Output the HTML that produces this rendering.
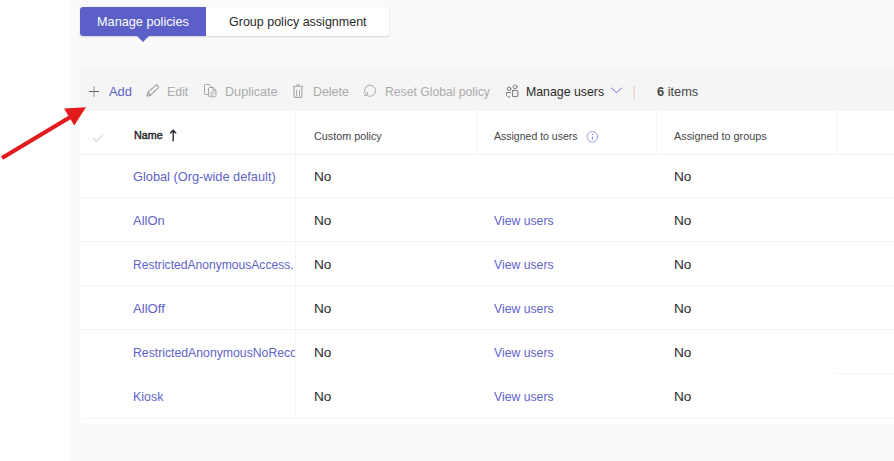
<!DOCTYPE html>
<html><head><meta charset="utf-8">
<style>
*{box-sizing:border-box;margin:0;padding:0}
html,body{width:894px;height:461px;overflow:hidden;background:#fff}
body{font-family:"Liberation Sans",sans-serif;position:relative;color:#242424}
#main{position:absolute;left:70px;top:0;width:824px;height:461px;background:#fafafa}
#tabs{position:absolute;left:80px;top:7px;width:309px;height:29px;background:#fff;border-radius:3px;box-shadow:0 1px 2px rgba(0,0,0,.16)}
#tab1bg{position:absolute;left:0;top:0;width:126px;height:29px;background:#5b5fc7;border-radius:3px 0 0 3px}
#tab1bg:after{content:"";position:absolute;left:56.5px;top:29px;border:6px solid transparent;border-top-color:#5b5fc7;border-bottom:0}
#toolbar{position:absolute;left:80px;top:68px;width:814px;height:43px;background:#f5f5f5;border-radius:3px 0 0 0}
#table{position:absolute;left:80px;top:111px;width:814px;height:313px;background:#fff;border-radius:0 0 0 3px}
.hr{position:absolute;left:80px;width:814px;height:1px;background:#f4f4f4}
.vr{position:absolute;width:1px;background:#f4f4f4}
.t{position:absolute;line-height:1;white-space:nowrap;transform-origin:0 0}
#clip{position:absolute;left:0;top:0;width:295px;height:461px;overflow:hidden}
svg{position:absolute;overflow:visible}
</style></head><body>
<div id="main"></div>
<div id="tabs"><div id="tab1bg"></div></div>
<div id="toolbar"></div>
<div id="table"></div>
<div class="hr" style="top:154px;background:#f0f0f0"></div>
<div class="hr" style="top:197px"></div>
<div class="hr" style="top:241px"></div>
<div class="hr" style="top:285px"></div>
<div class="hr" style="top:329px"></div>
<div class="hr" style="top:373px;left:836px;width:58px"></div>
<div class="hr" style="top:418px;background:#f5f5f5"></div>
<div class="vr" style="left:295px;top:111px;height:307px"></div>
<div class="vr" style="left:476px;top:111px;height:43px"></div>
<div class="vr" style="left:656px;top:111px;height:43px"></div>
<div class="vr" style="left:836px;top:111px;height:43px"></div>
<div class="t" id="tab1" style="left:97.13px;top:15.00px;font-size:13.2px;color:#fff;font-weight:400;transform:scaleX(0.9639)">Manage policies</div>
<div class="t" id="tab2" style="left:229.00px;top:15.00px;font-size:13.2px;color:#2a2a2a;font-weight:400;transform:scaleX(0.9479)">Group policy assignment</div>
<div class="t" id="add" style="left:109.07px;top:85.00px;font-size:13.2px;color:#5f63c9;font-weight:400;transform:scaleX(0.9769)">Add</div>
<div class="t" id="edit" style="left:166.92px;top:85.00px;font-size:13.2px;color:#ababab;font-weight:400;transform:scaleX(0.9377)">Edit</div>
<div class="t" id="dup" style="left:224.96px;top:85.00px;font-size:13.2px;color:#ababab;font-weight:400;transform:scaleX(0.9567)">Duplicate</div>
<div class="t" id="del" style="left:312.62px;top:85.00px;font-size:13.2px;color:#ababab;font-weight:400;transform:scaleX(0.9410)">Delete</div>
<div class="t" id="reset" style="left:384.50px;top:85.00px;font-size:13.2px;color:#ababab;font-weight:400;transform:scaleX(0.9236)">Reset Global policy</div>
<div class="t" id="manage" style="left:525.98px;top:85.00px;font-size:13.2px;color:#2a2a2a;font-weight:400;transform:scaleX(0.9346)">Manage users</div>
<div class="t" id="items" style="left:657.13px;top:85.00px;font-size:13.2px;color:#464646;font-weight:400;transform:scaleX(0.9686)"><b>6</b> items</div>
<div class="t" id="hname" style="left:133.65px;top:130.40px;font-size:11.4px;color:#2a2a2a;font-weight:400;-webkit-text-stroke:0.45px currentColor;transform:scaleX(0.9451)">Name</div>
<div class="t" id="hcust" style="left:313.74px;top:130.60px;font-size:11px;color:#464646;font-weight:400;transform:scaleX(0.9810)">Custom policy</div>
<div class="t" id="husers" style="left:493.65px;top:130.60px;font-size:11px;color:#464646;font-weight:400;transform:scaleX(0.9559)">Assigned to users</div>
<div class="t" id="hgroups" style="left:673.92px;top:130.60px;font-size:11px;color:#464646;font-weight:400;transform:scaleX(0.9835)">Assigned to groups</div>
<div class="t" id="c0" style="left:313.57px;top:170.00px;font-size:13.2px;color:#2a2a2a;font-weight:400;transform:scaleX(1.0304)">No</div>
<div class="t" id="g0" style="left:673.57px;top:170.00px;font-size:13.2px;color:#2a2a2a;font-weight:400;transform:scaleX(1.0304)">No</div>
<div class="t" id="c1" style="left:313.57px;top:214.00px;font-size:13.2px;color:#2a2a2a;font-weight:400;transform:scaleX(1.0304)">No</div>
<div class="t" id="v1" style="left:493.74px;top:214.00px;font-size:13.2px;color:#5f63c9;font-weight:400;transform:scaleX(0.9274)">View users</div>
<div class="t" id="g1" style="left:673.57px;top:214.00px;font-size:13.2px;color:#2a2a2a;font-weight:400;transform:scaleX(1.0304)">No</div>
<div class="t" id="c2" style="left:313.57px;top:258.00px;font-size:13.2px;color:#2a2a2a;font-weight:400;transform:scaleX(1.0304)">No</div>
<div class="t" id="v2" style="left:493.74px;top:258.00px;font-size:13.2px;color:#5f63c9;font-weight:400;transform:scaleX(0.9274)">View users</div>
<div class="t" id="g2" style="left:673.57px;top:258.00px;font-size:13.2px;color:#2a2a2a;font-weight:400;transform:scaleX(1.0304)">No</div>
<div class="t" id="c3" style="left:313.57px;top:302.00px;font-size:13.2px;color:#2a2a2a;font-weight:400;transform:scaleX(1.0304)">No</div>
<div class="t" id="v3" style="left:493.74px;top:302.00px;font-size:13.2px;color:#5f63c9;font-weight:400;transform:scaleX(0.9274)">View users</div>
<div class="t" id="g3" style="left:673.57px;top:302.00px;font-size:13.2px;color:#2a2a2a;font-weight:400;transform:scaleX(1.0304)">No</div>
<div class="t" id="c4" style="left:313.57px;top:346.00px;font-size:13.2px;color:#2a2a2a;font-weight:400;transform:scaleX(1.0304)">No</div>
<div class="t" id="v4" style="left:493.74px;top:346.00px;font-size:13.2px;color:#5f63c9;font-weight:400;transform:scaleX(0.9274)">View users</div>
<div class="t" id="g4" style="left:673.57px;top:346.00px;font-size:13.2px;color:#2a2a2a;font-weight:400;transform:scaleX(1.0304)">No</div>
<div class="t" id="c5" style="left:313.57px;top:390.00px;font-size:13.2px;color:#2a2a2a;font-weight:400;transform:scaleX(1.0304)">No</div>
<div class="t" id="v5" style="left:493.74px;top:390.00px;font-size:13.2px;color:#5f63c9;font-weight:400;transform:scaleX(0.9274)">View users</div>
<div class="t" id="g5" style="left:673.57px;top:390.00px;font-size:13.2px;color:#2a2a2a;font-weight:400;transform:scaleX(1.0304)">No</div>
<div id="clip">
<div class="t" id="n0" style="left:132.73px;top:170.00px;font-size:13.2px;color:#5f63c9;font-weight:400;transform:scaleX(0.9688)">Global (Org-wide default)</div>
<div class="t" id="n1" style="left:133.12px;top:214.00px;font-size:13.2px;color:#5f63c9;font-weight:400;transform:scaleX(0.9833)">AllOn</div>
<div class="t" id="n2" style="left:132.61px;top:258.00px;font-size:13.2px;color:#5f63c9;font-weight:400;transform:scaleX(0.9170)">RestrictedAnonymousAccess<span class="x">.</span></div>
<div class="t" id="n3" style="left:133.12px;top:302.00px;font-size:13.2px;color:#5f63c9;font-weight:400;transform:scaleX(0.9979)">AllOff</div>
<div class="t" id="n4" style="left:132.56px;top:346.00px;font-size:13.2px;color:#5f63c9;font-weight:400;transform:scaleX(0.9284)">RestrictedAnonymousNoReco<span class="x">rding</span></div>
<div class="t" id="n5" style="left:132.89px;top:390.00px;font-size:13.2px;color:#5f63c9;font-weight:400;transform:scaleX(0.9451)">Kiosk</div>
</div>
<svg class="ic" width="894" height="461" viewBox="0 0 894 461" style="left:0;top:0" fill="none" stroke-linecap="round" stroke-linejoin="round">
<!-- red arrow -->
<g id="redarrow"><line x1="2.0" y1="158.0" x2="70" y2="117.2" stroke="#e41b1c" stroke-width="4.15" stroke-linecap="butt"/>
<polygon points="86,107.2 64.0,108.6 74.2,125.6" fill="#e41b1c" stroke="none"/></g>
<!-- plus -->
<rect x="93" y="86" width="2" height="11" fill="#c6c6c6" stroke="none"/>
<rect x="89" y="91" width="10" height="1" fill="#725e5e" stroke="none"/>
<!-- pencil -->
<g stroke="#9c9c9c" stroke-width="1.1">
<path d="M146.9 96.2 L147.9 92.6 L155.3 85.6 A1.8 1.8 0 0 1 157.9 88.2 L150.5 95.2 Z"/>
<path d="M147.9 92.6 L150.5 95.2"/>
</g>
<!-- duplicate -->
<g stroke="#a4a4a4" stroke-width="1">
<path d="M208.5 94.5 H205.5 A1 1 0 0 1 204.5 93.5 V85.5 A1 1 0 0 1 205.5 84.5 H209.3 L211.4 86.8"/>
<path d="M208.5 88.5 A1 1 0 0 1 209.5 87.5 H213 L215.9 90.5 V95.8 A1 1 0 0 1 214.9 96.8 H209.5 A1 1 0 0 1 208.5 95.8 Z"/>
<path d="M212.9 87.6 V90.6 H215.8" stroke-width="0.9"/>
<path d="M210.4 92.4 H213.8 M210.4 93.9 H213.8 M210.4 95.3 H212.8" stroke-width="0.8" stroke="#b4b4b4"/>
</g>
<!-- trash -->
<g stroke="#a6a6a6" stroke-width="1">
<path d="M293.2 86.25 H302.8" stroke="#acacac"/>
<path d="M296.4 86 A1.7 1.9 0 0 1 299.7 86" stroke-width="1.1"/>
<path d="M294 86.8 L294.1 96.2 A1.2 1.2 0 0 0 295.3 97.4 H300.7 A1.2 1.2 0 0 0 301.9 96.2 L302 86.8" stroke-width="1.15"/>
<path d="M296.6 90.2 V95.5 M299.5 90.2 V95.5"/>
</g>
<!-- reset -->
<g stroke="#adadad" stroke-width="1">
<path d="M368.6 96.2 A5.6 5.6 0 1 0 365.6 94.2"/>
<path d="M367.6 92.4 V95.3 H364.2"/>
</g>
<!-- people -->
<g stroke="#756c6c" stroke-width="0.9">
<circle cx="509.1" cy="88.8" r="1.75"/>
<circle cx="515.1" cy="86.9" r="1.95"/>
<rect x="512.6" y="90.5" width="5.2" height="6.1" rx="0.3"/>
<path d="M510.6 92.5 H506.5 V94.5 A2.6 2.6 0 0 0 509.8 97"/>
</g>
<!-- chevron -->
<path d="M611.2 88 L616.5 92.6 L621.8 88" stroke="#6f73d2" stroke-width="1"/>
<!-- separator -->
<rect x="633" y="86" width="1" height="13" fill="#f8decd" stroke="none"/>
<rect x="634" y="86" width="1" height="13" fill="#dfdfdf" stroke="none"/>
<!-- check -->
<path d="M93.4 138.3 L96.4 141.2 L102 135.6" stroke="#b4bcd4" stroke-width="1"/>
<!-- up arrow -->
<path d="M173.2 140.7 V130.6 M170.6 132.9 L173.2 130.3 L175.8 132.9" stroke="#20202c" stroke-width="1.35"/>
<!-- info -->
<circle cx="592.4" cy="136.7" r="5.3" stroke="#8f93dc" stroke-width="0.9"/>
<path d="M592.4 136.6 V139.4" stroke="#7377d0" stroke-width="1" stroke-linecap="butt"/>
<circle cx="592.4" cy="134.5" r="0.6" fill="#7377d0" stroke="none"/>
</svg>

</body></html>
